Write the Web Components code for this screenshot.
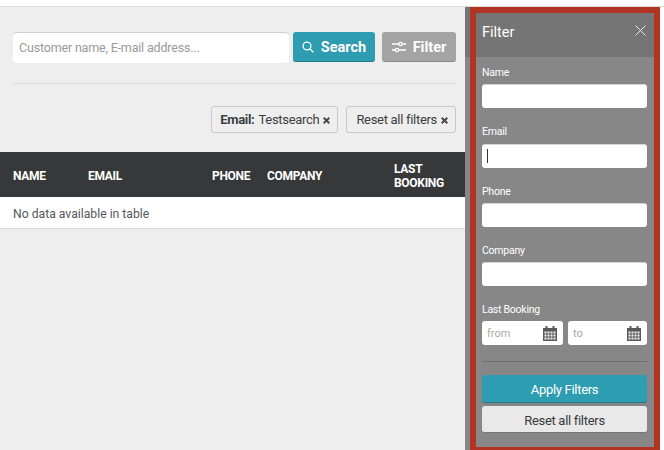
<!DOCTYPE html>
<html>
<head>
<meta charset="utf-8">
<style>
    html, body { margin: 0; height: 100%; background: #fff; overflow: hidden; }
    body { font-family: Roboto, "Liberation Sans", sans-serif; }
</style>
</head>
<body>
<customer-page>
    <search-bar slot="main"></search-bar>
    <div slot="main" class="chips" style="display:flex;justify-content:flex-end;gap:8px;padding:22px 9px 0 0;">
        <filter-chip label="Email:">Testsearch</filter-chip>
        <filter-chip>Reset all filters</filter-chip>
    </div>
    <customer-table slot="main"></customer-table>
    <filter-panel slot="side">
        <filter-field label="Name"></filter-field>
        <filter-field label="Email" focused></filter-field>
        <filter-field label="Phone"></filter-field>
        <filter-field label="Company"></filter-field>
        <date-range label="Last Booking"></date-range>
    </filter-panel>
</customer-page>

<script>
/**
 * Page frame: white top strip, grey content column and the side panel
 */
class CustomerPage extends HTMLElement {
    constructor() {
        super();
        this.attachShadow({ mode: 'open' });
        this.shadowRoot.innerHTML = `
            <style>
                :host { display: flex; flex-direction: column; height: 450px; color: #3a3a3a; }
                .top { height: 6px; flex: none; }
                .row { flex: 1; display: flex; min-height: 0; border-top: 1px solid #dcdcdc; }
                .main { width: 465px; flex: none; background: #eeeeee; }
            </style>
            <div class="top"></div>
            <div class="row">
                <div class="main"><slot name="main"></slot></div>
                <slot name="side"></slot>
            </div>
        `;
    }
}

/**
 * Search input with the Search and Filter buttons
 */
class SearchBar extends HTMLElement {
    constructor() {
        super();
        this.attachShadow({ mode: 'open' });
        this.shadowRoot.innerHTML = `
            <style>
                :host { display: block; margin: 0 9px 0 13px; padding: 25px 0 20px; border-bottom: 1px solid #dadada; }
                .row { display: flex; align-items: flex-start; }
                .input {
                    box-sizing: border-box; width: 276px; height: 31px; margin-right: 4px;
                    padding: 0 6px; background: #fff; border: 0; border-top: 1px solid #cfcfcf; border-radius: 4px;
                    font: 12.5px/29px Roboto, sans-serif; letter-spacing: -0.18px; color: #9a9a9a;
                }
                button {
                    box-sizing: border-box; height: 30px; border: 0; border-radius: 3px; padding: 1px 0 0;
                    display: flex; align-items: center; justify-content: center;
                    font: 700 14.5px Roboto, sans-serif; color: #fff;
                }
                .search { width: 82px; background: #2e9cb1; border-bottom: 1px solid #217c8d; gap: 7px; margin-right: 7px; }
                .filter { width: 74px; background: #a4a4a4; border-bottom: 1px solid #8a8a8a; gap: 7px; }
            </style>
            <div class="row">
                <div class="input">Customer name, E-mail address...</div>
                <button class="search">
                    <svg width="12" height="12" viewBox="0 0 12 12" fill="none" stroke="#fff" stroke-width="1.3"><circle cx="5" cy="5" r="3.9"/><path d="M8 8l3.4 3.4"/></svg>
                    Search
                </button>
                <button class="filter">
                    <svg width="14" height="12" viewBox="0 0 14 12" fill="none" stroke="#fff" stroke-width="1.3"><path d="M0 3h14M0 9h14"/><circle cx="8.500" cy="3" r="1.7" fill="#a4a4a4"/><circle cx="5" cy="9" r="1.7" fill="#a4a4a4"/></svg>
                    Filter
                </button>
            </div>
        `;
    }
}

/**
 * Outlined chip for an applied filter
 */
class FilterChip extends HTMLElement {
    constructor() {
        super();
        this.attachShadow({ mode: 'open' });
    }

    connectedCallback() {
        const label = this.getAttribute('label');
        this.shadowRoot.innerHTML = `
            <style>
                :host {
                    display: inline-flex; align-items: center; box-sizing: border-box; height: 27px;
                    padding: 0 7px 0 ${label ? 8 : 9}px; border: 1px solid #c9c9c9; border-radius: 3px;
                    font: 13px Roboto, sans-serif; letter-spacing: -0.3px; color: #3c3f42; gap: 4px;
                }
                b { font-weight: 700; }
                svg { margin-top: 1px; }
            </style>
            ${label ? `<b>${label}</b>` : ''}<slot></slot>
            <svg width="7" height="7" viewBox="0 0 7 7" stroke="#4a4a4a" stroke-width="2"><path d="M.7.7l5.600 5.600M6.300.7l-5.600 5.600"/></svg>
        `;
    }
}

/**
 * Customer table, empty state
 */
class CustomerTable extends HTMLElement {
    constructor() {
        super();
        this.attachShadow({ mode: 'open' });
        this.shadowRoot.innerHTML = `
            <style>
                :host { display: block; margin-top: 19px; }
                .head {
                    display: grid; grid-template-columns: 75px 124px 55px 127px 1fr; align-items: center;
                    box-sizing: border-box; height: 45px; padding: 2px 0 0 13px; background: #36383a; color: #fff;
                    font: 700 12px/14px Roboto, sans-serif; letter-spacing: -0.3px;
                }
                .empty {
                    height: 31px; padding-left: 13px; background: #fff; border-bottom: 1px solid #dadada;
                    font: 12.2px/34px Roboto, sans-serif; color: #55585b;
                }
            </style>
            <div class="head">
                <span>NAME</span><span>EMAIL</span><span>PHONE</span><span>COMPANY</span><span>LAST<br>BOOKING</span>
            </div>
            <div class="empty">No data available in table</div>
        `;
    }
}

/**
 * Labelled text field in the filter panel
 */
class FilterField extends HTMLElement {
    constructor() {
        super();
        this.attachShadow({ mode: 'open' });
    }

    connectedCallback() {
        const caret = this.hasAttribute('focused') ? '<i></i>' : '';
        this.shadowRoot.innerHTML = `
            <style>
                :host { display: block; height: 59px; }
                :host(:first-child) { height: 60px; }
                label { display: block; height: 21px; font: 10.5px/19px Roboto, sans-serif; letter-spacing: -0.25px; color: #fff; }
                :host([focused]) label { line-height: 17px; }
                .box {
                    box-sizing: border-box; height: 24px; background: #fff; border-radius: 3px;
                    border-top: 1px solid #d4d4d4; padding: 4px 0 0 5px;
                }
                i { display: block; width: 1px; height: 14px; background: #333; }
            </style>
            <label>${this.getAttribute('label')}</label>
            <div class="box">${caret}</div>
        `;
    }
}

/**
 * From / to date inputs with calendar icons
 */
class DateRange extends HTMLElement {
    constructor() {
        super();
        this.attachShadow({ mode: 'open' });
    }

    connectedCallback() {
        const cells = [5.5, 8.5, 11.5].map(y =>
            [1.5, 4.5, 7.5, 10.5].map(x => `<rect x="${x}" y="${y}" width="2" height="2" fill="#f4f4f4"/>`).join('')
        ).join('');
        const icon = `<svg width="14" height="15" viewBox="0 0 14 15"><path fill="#5a5a5a" d="M0 2h2.500V0h2v2h5V0h2v2H14v13H0z"/>${cells}</svg>`;
        this.shadowRoot.innerHTML = `
            <style>
                :host { display: block; }
                label { display: block; height: 21px; font: 10.5px/19px Roboto, sans-serif; letter-spacing: -0.25px; color: #fff; }
                .row { display: flex; gap: 5px; }
                .box {
                    box-sizing: border-box; height: 24px; background: #fff; border-radius: 3px; padding: 1px 6px 0 5px;
                    display: flex; align-items: center; justify-content: space-between;
                    font: 11px Roboto, sans-serif; color: #a8a8a8;
                }
                .from { width: 81px; }
                .to { width: 79px; }
            </style>
            <label>${this.getAttribute('label')}</label>
            <div class="row">
                <div class="box from">from${icon}</div>
                <div class="box to">to${icon}</div>
            </div>
        `;
    }
}

/**
 * Side panel with the red outline, title bar, fields and actions
 */
class FilterPanel extends HTMLElement {
    constructor() {
        super();
        this.attachShadow({ mode: 'open' });
        this.shadowRoot.innerHTML = `
            <style>
                :host {
                    display: block; box-sizing: border-box; width: 195px; height: 443px; flex: none;
                    padding-left: 5px; background: linear-gradient(#757575 50px, #878787 50px);
                }
                .frame { box-sizing: border-box; height: 100%; border: 6px solid #b13324; border-bottom-width: 3px; display: flex; flex-direction: column; }
                header {
                    height: 44px; flex: none; box-sizing: border-box; padding: 7px 8px 0 6px; background: #757575; color: #fff;
                    display: flex; align-items: flex-start; justify-content: space-between; font: 14.5px/26px Roboto, sans-serif;
                }
                header svg { margin-top: 5px; }
                .body { flex: 1; padding: 6px 7px 0 6px; background: #878787; }
                hr { height: 1px; margin: 16px 0 13px; border: 0; background: #6e6e6e; }
                button {
                    display: block; box-sizing: border-box; width: 100%; border: 0; border-radius: 3px; padding: 2px 0 0;
                    font: 13px Roboto, sans-serif; letter-spacing: -0.3px;
                }
                .apply { height: 28px; background: #2e9cb1; border-bottom: 1px solid #217c8d; color: #fff; margin-bottom: 3px; }
                .reset { height: 27px; background: #e9e9e9; border-bottom: 1px solid #777; color: #3a3a3a; }
            </style>
            <div class="frame">
                <header>Filter
                    <svg width="11" height="11" viewBox="0 0 11 11" stroke="#e6e6e6" stroke-width="1"><path d="M.5.5l10 10M10.500.5l-10 10"/></svg>
                </header>
                <div class="body">
                    <slot></slot>
                    <hr>
                    <button class="apply">Apply Filters</button>
                    <button class="reset">Reset all filters</button>
                </div>
            </div>
        `;
    }
}

customElements.define('customer-page', CustomerPage);
customElements.define('search-bar', SearchBar);
customElements.define('filter-chip', FilterChip);
customElements.define('customer-table', CustomerTable);
customElements.define('filter-field', FilterField);
customElements.define('date-range', DateRange);
customElements.define('filter-panel', FilterPanel);
</script>
</body>
</html>
